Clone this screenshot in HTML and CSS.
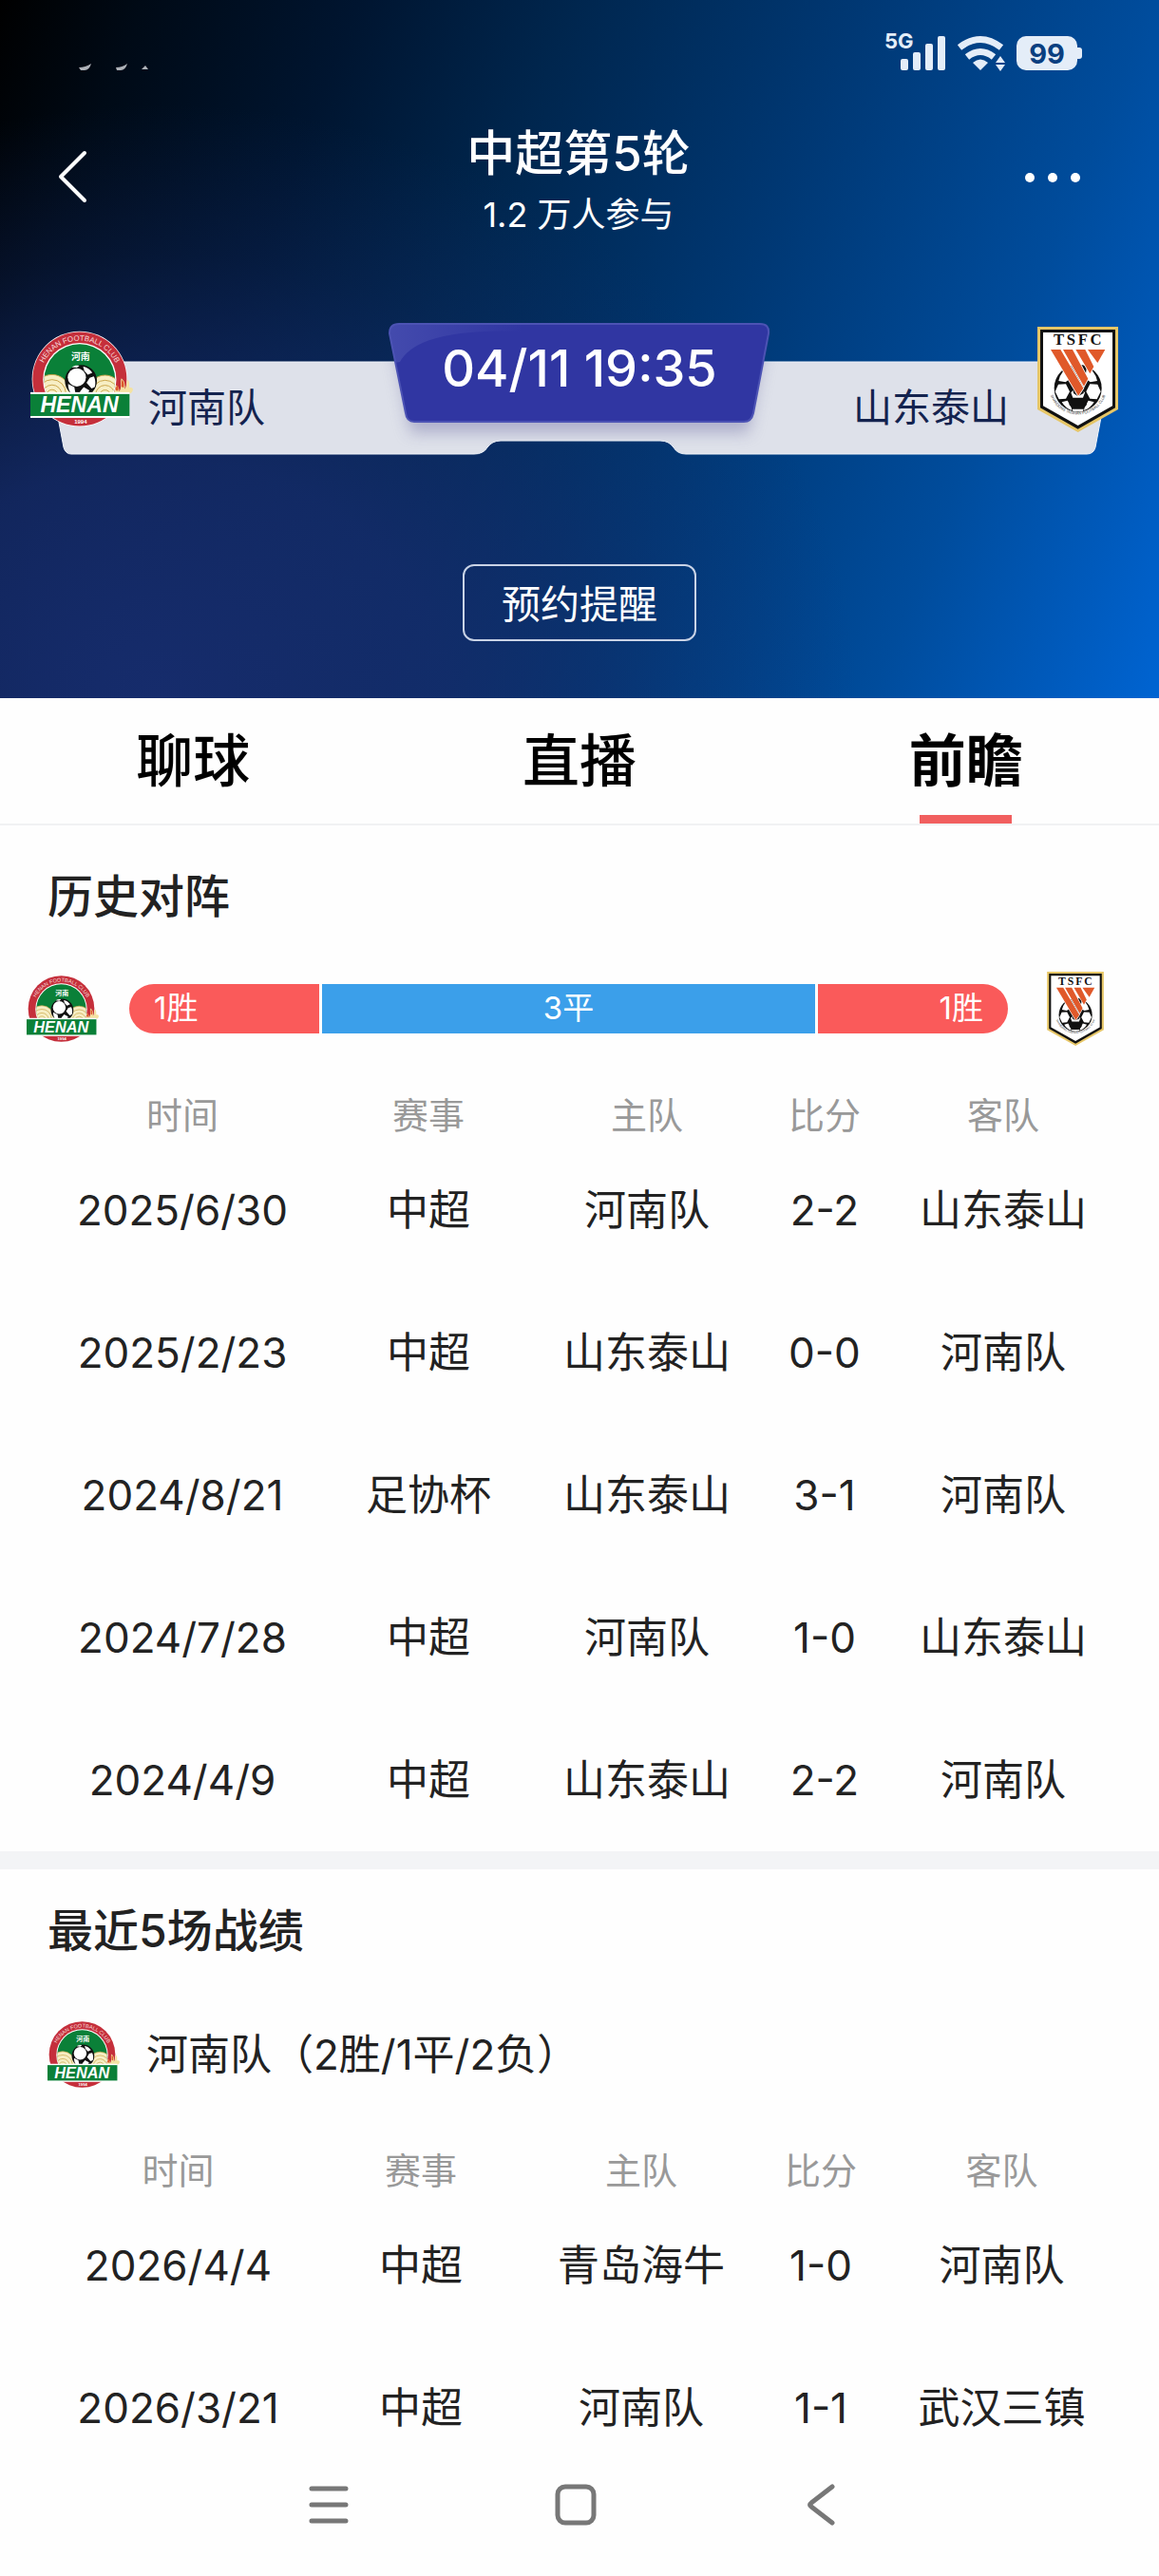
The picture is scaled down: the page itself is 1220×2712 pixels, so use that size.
FILE: index.html
```html
<!DOCTYPE html>
<html lang="zh-CN">
<head>
<meta charset="utf-8">
<meta name="viewport" content="width=device-width, initial-scale=1">
<title>中超第5轮</title>
<link rel="stylesheet" href="styles.css">
</head>
<body>
<svg class="sprite" aria-hidden="true">
  <defs>
    <clipPath id="above-banner"><rect x="96" y="86" width="330" height="198"/></clipPath>
    <clipPath id="inner-disc"><circle cx="253" cy="240" r="113"/></clipPath>
    <path id="club-arc" d="M132 202 A128 128 0 0 1 374 202"/>
    <path id="shield-arc" d="M855 281 A92 92 0 0 0 1033 281"/>
  </defs>
  <symbol id="crest-henan" viewBox="96 86 327 304">
    <circle cx="253" cy="238" r="152" fill="#fff"/>
    <circle cx="253" cy="238" r="150" fill="#c52f3b"/>
    <circle cx="253" cy="240" r="117" fill="#fff"/>
    <circle cx="253" cy="240" r="113" fill="#0a8038"/>
    <text class="crest-arc"><textPath href="#club-arc" startOffset="50%" text-anchor="middle">HENAN FOOTBALL CLUB</textPath></text>
    <text class="crest-cn" x="256" y="178" text-anchor="middle">河南</text>
    <g clip-path="url(#above-banner)">
      <g clip-path="url(#inner-disc)" fill="#f7eec4" stroke="#c9a54a" stroke-width="3">
        <circle cx="165" cy="280" r="56"/><circle cx="165" cy="284" r="44"/><circle cx="165" cy="288" r="31"/><circle cx="165" cy="290" r="18"/>
        <circle cx="334" cy="280" r="54"/><circle cx="334" cy="284" r="42"/><circle cx="334" cy="288" r="30"/><circle cx="334" cy="290" r="17"/>
      </g>
      <path d="M364 288c-4-14 6-18 4-30 10 4 12 12 10 20 12-12 2-28 8-42 10 8 14 22 10 34 10-8 4-20 10-30 8 8 4 18 6 26 6-2 10 0 11 6-2 8-8 14-18 18z" fill="#f4e2a2"/>
      <path d="M368 274c-2-8 4-12 3-18 7 5 7 14 4 20zM386 262c2-8-2-14 2-22 7 8 8 16 5 26z" fill="#dc5a2c"/>
      <circle cx="257" cy="244" r="51" fill="#111"/>
      <circle cx="244" cy="233" r="29" fill="#fff"/>
      <path d="M264 199c12 2 24 10 29 19l-14 6-11-12zM298 230c6 10 6 24 3 34l-10 4-16-18 10-16zM216 254l20 10 4 22h-14c-6-8-10-20-10-32zM266 264l18 10-8 16-18 2-4-14zM228 200c8-5 16-6 24-4l-8 6z" fill="#fff"/>
    </g>
    <rect x="96" y="280" width="316" height="82" fill="#fff"/>
    <rect x="96" y="286" width="316" height="70" fill="#0a8038"/>
    <text class="crest-banner" x="252" y="344" text-anchor="middle">HENAN</text>
    <text class="crest-year" x="256" y="380" text-anchor="middle">1994</text>
  </symbol>
  <symbol id="crest-taishan" viewBox="816 72 255 333">
    <path d="M816 72h255v261l-127 72-128-72z" fill="#e6c667"/>
    <path d="M825 81h237v247l-118 67-119-67z" fill="#111"/>
    <path d="M834 90h219v232l-109 62-110-62z" fill="#fff"/>
    <text class="crest-tsfc" x="947" y="130" text-anchor="middle">TSFC</text>
    <circle cx="944" cy="266" r="75" fill="#111"/>
    <g fill="#fff">
      <path d="M897 213l20-8 4 30-16 12-22-4q4-18 14-30zM991 213l-20-8-4 30 16 12 22-4q-4-18-14-30z"/>
      <path d="M882 254l24-1 12 24-12 22-22 2-12-24zM1006 254l-24-1-12 24 12 22 22 2 12-24z"/>
      <path d="M893 310l18-5 12 22 2 9q-20-6-32-26zM995 310l-18-5-12 22-2 9q20-6 32-26z"/>
      <path d="M926 332h36l-2 6q-16 3-32 0zM930 196l14-6 14 6-4 8h-20z"/>
      <path d="M922 280l10-10h24l10 10-6 16h-32z"/>
    </g>
    <path d="M924 298h40l8 20-12 12h-32l-12-12zM924 236l20-10 22 10-4 46-18 10-14-10z" fill="#111"/>
    <g fill="#e0592a" stroke="#fff" stroke-width="5" paint-order="stroke">
      <path d="M975 144h55l-24 42z"/>
      <path d="M937 144h30l27 54-12 22z"/>
      <path d="M897 144h30l49 92-13 24z"/>
      <path d="M858 144h31l72 122-16 24z"/>
    </g>
    <text class="crest-tiny"><textPath href="#shield-arc" startOffset="50%" text-anchor="middle">SHANDONG TAISHAN FOOTBALL CLUB</textPath></text>
  </symbol>
</svg>

<header class="hero">
  <div class="status-bar">
    <svg class="clock-trace" viewBox="80 64 80 10" aria-hidden="true">
      <path d="M83 70q7 0 13-4-2 7-7 7h-4zM122 70q7 0 12-4-2 7-7 7h-4zM149 72l4-4 3 4z" fill="#aeb2b8"/>
    </svg>
    <svg class="status-icons" viewBox="930 32 210 44" role="img" aria-label="5G 信号，Wi-Fi，电量 99">
      <g fill="#e4edf8">
        <text class="status-net" x="931" y="51">5G</text>
        <rect x="948" y="62" width="8" height="12" rx="2"/>
        <rect x="961" y="55" width="8" height="19" rx="2"/>
        <rect x="974" y="46" width="8" height="28" rx="2"/>
        <rect x="987" y="38" width="8" height="36" rx="2"/>
        <path d="M1032 74l-8-8q8-7 16 0z"/>
        <path d="M1048 66l5-7 5 7zM1048 68h10l-5 7z"/>
        <rect x="1070" y="38" width="64" height="36" rx="10"/>
        <rect x="1130" y="50" width="9" height="12" rx="3"/>
      </g>
      <path d="M1010 50q22-17 44 0M1018 60q14-11 28 0" fill="none" stroke="#e4edf8" stroke-width="7"/>
      <text class="status-power" x="1102" y="67" text-anchor="middle">99</text>
    </svg>
  </div>

  <div class="title-bar">
    <button class="icon-button" type="button" aria-label="返回">
      <svg viewBox="0 0 32 58" width="32" height="58"><path d="M29 3L4 28l25 25" fill="none" stroke="#fff" stroke-width="4" stroke-linecap="round" stroke-linejoin="round"/></svg>
    </button>
    <div class="heading">
      <h1>中超第5轮</h1>
      <p>1.2 万人参与</p>
    </div>
    <button class="icon-button" type="button" aria-label="更多">
      <svg viewBox="0 0 60 12" width="60" height="12" fill="#fff"><circle cx="6" cy="6" r="5"/><circle cx="30" cy="6" r="5"/><circle cx="54" cy="6" r="5"/></svg>
    </button>
  </div>

  <div class="scoreboard">
    <svg class="board-shape" viewBox="0 341 1220 140" preserveAspectRatio="none" aria-hidden="true">
      <defs>
        <filter id="soft" x="-10%" y="-20%" width="120%" height="150%"><feGaussianBlur stdDeviation="8"/></filter>
        <clipPath id="board-clip"><path d="M50 381h1120l-17 90q-2 7-9 7H722q-9 0-13-7-5-7-14-7H527q-9 0-14 7-4 7-14 7H75q-6 0-8-7z"/></clipPath>
        <clipPath id="badge-clip"><path d="M420 341h380q10 0 9 10l-16 84q-2 9-10 9H436q-8 0-9-9l-17-84q0-10 10-10z"/></clipPath>
        <linearGradient id="shine" x1="0" x2="1" y1="0" y2="0"><stop offset="0" stop-color="#454cae"/><stop offset="1" stop-color="#3036a2"/></linearGradient>
      </defs>
      <path d="M50 381h1120l-17 90q-2 7-9 7H722q-9 0-13-7-5-7-14-7H527q-9 0-14 7-4 7-14 7H75q-6 0-8-7z" fill="#dee1ea" stroke="#f0f4fb" stroke-width="1"/>
      <g clip-path="url(#board-clip)"><path d="M414 360h392l-18 96H432z" fill="#8f90b8" opacity=".6" filter="url(#soft)"/></g>
      <g clip-path="url(#badge-clip)">
        <path d="M400 341h420v104H400z" fill="#3036a2"/>
        <path d="M400 341h150v8q-110-4-129 32l-21 4z" fill="url(#shine)"/>
      </g>
      <path d="M420 341h380q10 0 9 10l-16 84q-2 9-10 9H436q-8 0-9-9l-17-84q0-10 10-10z" fill="none" stroke="#4c53b4" stroke-width="2"/>
    </svg>
    <div class="side side-home">
      <svg class="crest crest-home" role="img" aria-label="河南队"><use href="#crest-henan"/></svg>
      <span class="side-name">河南队</span>
    </div>
    <time class="kickoff" datetime="04-11T19:35">04/11 19:35</time>
    <div class="side side-away">
      <span class="side-name">山东泰山</span>
      <svg class="crest crest-away" role="img" aria-label="山东泰山"><use href="#crest-taishan"/></svg>
    </div>
  </div>

  <button class="remind" type="button">预约提醒</button>
</header>

<nav class="tabs">
  <a href="#chat">聊球</a>
  <a href="#live">直播</a>
  <a href="#preview" class="active" aria-current="page">前瞻</a>
</nav>

<main id="preview">
  <section class="panel">
    <h2>历史对阵</h2>
    <div class="record">
      <svg class="crest-small" role="img" aria-label="河南队"><use href="#crest-henan"/></svg>
      <div class="record-bar">
        <span class="win">1胜</span>
        <span class="draw">3平</span>
        <span class="loss">1胜</span>
      </div>
      <svg class="crest-shield" role="img" aria-label="山东泰山"><use href="#crest-taishan"/></svg>
    </div>
    <table class="history">
      <colgroup><col class="c-date"><col class="c-cup"><col class="c-home"><col class="c-score"><col class="c-away"></colgroup>
      <thead><tr><th>时间</th><th>赛事</th><th>主队</th><th>比分</th><th>客队</th></tr></thead>
      <tbody>
        <tr><td>2025/6/30</td><td>中超</td><td>河南队</td><td>2-2</td><td>山东泰山</td></tr>
        <tr><td>2025/2/23</td><td>中超</td><td>山东泰山</td><td>0-0</td><td>河南队</td></tr>
        <tr><td>2024/8/21</td><td>足协杯</td><td>山东泰山</td><td>3-1</td><td>河南队</td></tr>
        <tr><td>2024/7/28</td><td>中超</td><td>河南队</td><td>1-0</td><td>山东泰山</td></tr>
        <tr><td>2024/4/9</td><td>中超</td><td>山东泰山</td><td>2-2</td><td>河南队</td></tr>
      </tbody>
    </table>
  </section>

  <section class="panel panel-recent">
    <h2>最近5场战绩</h2>
    <div class="team-line">
      <svg class="crest-small" role="img" aria-label="河南队"><use href="#crest-henan"/></svg>
      <h3>河南队（2胜/1平/2负）</h3>
    </div>
    <table class="recent">
      <colgroup><col class="c-date"><col class="c-cup"><col class="c-home"><col class="c-score"><col class="c-away"></colgroup>
      <thead><tr><th>时间</th><th>赛事</th><th>主队</th><th>比分</th><th>客队</th></tr></thead>
      <tbody>
        <tr><td>2026/4/4</td><td>中超</td><td>青岛海牛</td><td>1-0</td><td>河南队</td></tr>
        <tr><td>2026/3/21</td><td>中超</td><td>河南队</td><td>1-1</td><td>武汉三镇</td></tr>
      </tbody>
    </table>
  </section>
</main>

<footer class="system-nav">
  <button type="button" aria-label="最近任务">
    <svg viewBox="0 0 44 44" width="44" height="44"><path d="M4 5h36M4 22h36M4 39h36" stroke="#777" stroke-width="5" stroke-linecap="round"/></svg>
  </button>
  <button type="button" aria-label="主屏幕">
    <svg viewBox="0 0 44 44" width="44" height="44"><rect x="3" y="3" width="38" height="38" rx="8" fill="none" stroke="#777" stroke-width="5"/></svg>
  </button>
  <button type="button" aria-label="返回">
    <svg viewBox="0 0 44 44" width="44" height="44"><path d="M32 3L10 20q-3 2 0 4l22 17" fill="none" stroke="#777" stroke-width="5" stroke-linecap="round"/></svg>
  </button>
</footer>
</body>
</html>
```

FILE: styles.css
```css
* {
  box-sizing: border-box;
}

body {
  margin: 0;
  background: #fefefe;
  color: #222;
  font-family: Inter, "Noto Sans CJK SC", sans-serif;
}

h1, h2, h3, p {
  margin: 0;
}

button {
  padding: 0;
  border: 0;
  background: none;
  color: inherit;
  font: inherit;
}

button svg {
  display: block;
}

.sprite {
  position: absolute;
  width: 0;
  height: 0;
}

/* crest lettering */
.crest-arc { font: 24px "Liberation Sans", sans-serif; fill: #f6d9d9; }
.crest-cn { font: 700 30px "Noto Sans CJK SC", sans-serif; fill: #fff; }
.crest-banner { font: italic 700 70px "Liberation Sans", sans-serif; fill: #fff; }
.crest-year { font: 700 18px "Liberation Sans", sans-serif; fill: #fff; }
.crest-tsfc { font: 700 50px "Liberation Serif", serif; letter-spacing: 8px; fill: #111; }
.crest-tiny { font: 12px "Liberation Sans", sans-serif; fill: #333; }

/* hero */
.hero {
  display: flex;
  flex-direction: column;
  height: 735px;
  color: #fff;
  background:
    radial-gradient(ellipse 60% 85% at 14% 100%, rgba(22, 44, 108, 1) 0%, rgba(22, 44, 108, .8) 40%, rgba(22, 44, 108, .25) 75%, rgba(22, 44, 108, 0) 100%),
    linear-gradient(112deg, #000 0%, #000a16 10%, #001530 25%, #00264e 40%, #003874 60%, #004c9c 80%, #005abc 92%, #0064d2 100%);
}

.status-bar {
  display: flex;
  justify-content: space-between;
  align-items: flex-end;
  height: 76px;
  padding: 0 80px;
}

.clock-trace {
  width: 80px;
  height: 12px;
}

.status-icons {
  width: 210px;
  height: 44px;
}

.status-net { font: 700 22px Inter, sans-serif; }
.status-power { font: 700 29px Inter, sans-serif; fill: #0a3f80; }

.title-bar {
  display: flex;
  justify-content: space-between;
  align-items: flex-start;
  padding: 54px 82px 0 60px;
}

.icon-button {
  display: flex;
  width: 60px;
  height: 58px;
  margin-top: 28px;
  align-items: center;
}

.heading {
  padding-left: 20px;
  text-align: center;
}

.heading h1 {
  font-size: 51px;
  font-weight: 500;
  line-height: 64px;
}

.heading p {
  font-size: 36px;
  line-height: 64px;
}

.scoreboard {
  position: relative;
  display: grid;
  grid-template-columns: 1fr 400px 1fr;
  height: 140px;
  margin-top: 83px;
}

.board-shape {
  position: absolute;
  inset: 0;
  width: 100%;
  height: 100%;
  overflow: visible;
}

.side {
  position: relative;
  display: flex;
}

.side-home {
  gap: 16px;
  padding-left: 32px;
}

.side-away {
  justify-content: flex-end;
  gap: 30px;
  padding-right: 43px;
}

.side-name {
  padding-top: 64px;
  color: #14234f;
  font-size: 41px;
  line-height: 48px;
}

.crest-home {
  width: 108px;
  height: 102px;
  margin-top: 7px;
}

.crest-away {
  width: 85px;
  height: 111px;
  margin-top: 3px;
}

.kickoff {
  position: relative;
  padding-top: 16px;
  font-size: 54px;
  font-weight: 500;
  line-height: 62px;
  text-align: center;
}

.remind {
  align-self: center;
  width: 246px;
  height: 81px;
  margin-top: 113px;
  padding-bottom: 4px;
  border: 2px solid #c9d3e6;
  border-radius: 12px;
  font-size: 41px;
}

/* tabs */
.tabs {
  display: grid;
  grid-template-columns: repeat(3, 1fr);
  height: 134px;
  border-bottom: 2px solid #f1f2f3;
}

.tabs a {
  display: flex;
  flex-direction: column;
  align-items: center;
  justify-content: space-between;
  padding-top: 26px;
  color: #000;
  font-size: 60px;
  font-weight: 500;
  line-height: 80px;
  text-decoration: none;
}

.tabs .active {
  font-weight: 700;
}

.tabs .active::after {
  content: "";
  width: 97px;
  height: 9px;
  background: #f15f5f;
}

/* panels */
.panel {
  padding: 43px 50px 0;
}

.panel-recent {
  padding-top: 33px;
  border-top: 19px solid #f3f4f6;
}

h2 {
  font-size: 48px;
  font-weight: 500;
  line-height: 64px;
}

.record {
  display: flex;
  align-items: center;
  height: 80px;
  margin: 46px 8px 0 -22px;
}

.crest-small {
  width: 76px;
  height: 72px;
}

.crest-shield {
  width: 60px;
  height: 78px;
}

.record-bar {
  display: grid;
  flex: 1;
  grid-template-columns: 200px 1fr 200px;
  gap: 3px;
  height: 52px;
  margin: 0 41px 0 32px;
  overflow: hidden;
  border-radius: 26px;
  color: #fff;
  font-size: 33px;
  line-height: 50px;
}

.win, .loss {
  padding: 0 26px;
  background: #fa5a5a;
}

.loss {
  text-align: right;
}

.draw {
  background: #3b9fea;
  text-align: center;
}

/* tables */
table {
  width: 100%;
  border-collapse: collapse;
  table-layout: fixed;
}

th, td {
  padding: 0;
  text-align: center;
  white-space: nowrap;
}

th {
  height: 50px;
  color: #999;
  font-size: 38px;
  font-weight: 400;
  line-height: 50px;
}

td {
  height: 150px;
  font-size: 44px;
  line-height: 60px;
}

.history { margin-top: 47px; }
.history .c-date { width: 284px; }
.history .c-cup { width: 234px; }
.history .c-home { width: 226px; }
.history .c-score { width: 148px; }
.history .c-away { width: 228px; }

.recent { margin-top: 61px; }
.recent .c-date { width: 275px; }
.recent .c-cup { width: 236px; }
.recent .c-home { width: 228px; }
.recent .c-score { width: 150px; }
.recent .c-away { width: 231px; }

.team-line {
  display: flex;
  align-items: center;
  gap: 28px;
  margin-top: 62px;
}

.team-line h3 {
  font-size: 44px;
  font-weight: 400;
  line-height: 60px;
}

/* system navigation */
.system-nav {
  display: flex;
  justify-content: center;
  gap: 216px;
  padding: 5px 8px 53px 0;
}
```
